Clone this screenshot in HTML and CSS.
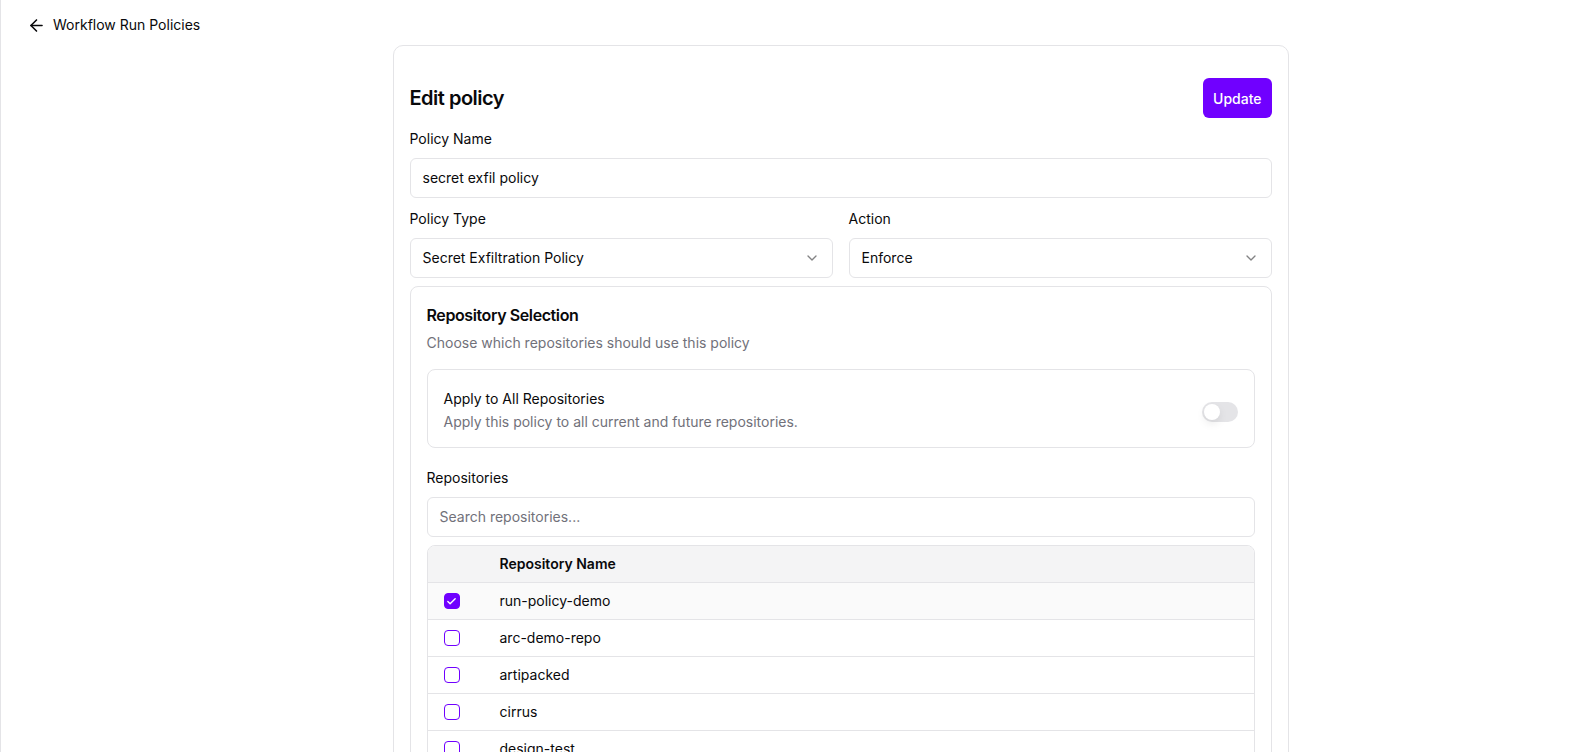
FILE: index.html
```html
<!DOCTYPE html>
<html lang="en">
<head>
    <meta charset="UTF-8">
    <meta name="viewport" content="width=device-width, initial-scale=1.0">
    <title>Edit policy</title>
    <link rel="stylesheet" href="styles.css">
</head>
<body>
    <div class="page">
        <a class="back" href="#">
            <svg class="back-icon" viewBox="0 0 24 24" fill="none" stroke="currentColor" stroke-width="2" stroke-linecap="round" stroke-linejoin="round"><path d="m12 19-7-7 7-7"/><path d="M19 12H5"/></svg>
            <span>Workflow Run Policies</span>
        </a>

        <div class="main">
            <div class="card">
                <div class="card-head">
                    <h1>Edit policy</h1>
                    <button class="button">Update</button>
                </div>

                <div class="field">
                    <label class="label">Policy Name</label>
                    <div class="input">secret exfil policy</div>
                </div>

                <div class="field-row">
                    <div class="field">
                        <label class="label">Policy Type</label>
                        <div class="input select">
                            <span>Secret Exfiltration Policy</span>
                            <svg class="chevron" viewBox="0 0 24 24" fill="none" stroke="currentColor" stroke-width="2" stroke-linecap="round" stroke-linejoin="round"><path d="m6 9 6 6 6-6"/></svg>
                        </div>
                    </div>
                    <div class="field">
                        <label class="label">Action</label>
                        <div class="input select">
                            <span>Enforce</span>
                            <svg class="chevron" viewBox="0 0 24 24" fill="none" stroke="currentColor" stroke-width="2" stroke-linecap="round" stroke-linejoin="round"><path d="m6 9 6 6 6-6"/></svg>
                        </div>
                    </div>
                </div>

                <div class="repo-box">
                    <h2>Repository Selection</h2>
                    <p class="muted desc">Choose which repositories should use this policy</p>

                    <div class="apply-all">
                        <div>
                            <div class="apply-title">Apply to All Repositories</div>
                            <div class="muted apply-desc">Apply this policy to all current and future repositories.</div>
                        </div>
                        <span class="switch"><span class="knob"></span></span>
                    </div>

                    <label class="label repos-label">Repositories</label>
                    <div class="input placeholder">Search repositories...</div>

                    <div class="table">
                        <div class="row head">
                            <div></div>
                            <div>Repository Name</div>
                        </div>
                        <div class="row selected">
                            <div><span class="check checked"><svg viewBox="0 0 24 24" fill="none" stroke="currentColor" stroke-width="3" stroke-linecap="round" stroke-linejoin="round"><path d="M20 6 9 17l-5-5"/></svg></span></div>
                            <div>run-policy-demo</div>
                        </div>
                        <div class="row">
                            <div><span class="check"></span></div>
                            <div>arc-demo-repo</div>
                        </div>
                        <div class="row">
                            <div><span class="check"></span></div>
                            <div>artipacked</div>
                        </div>
                        <div class="row">
                            <div><span class="check"></span></div>
                            <div>cirrus</div>
                        </div>
                        <div class="row">
                            <div><span class="check"></span></div>
                            <div>design-test</div>
                        </div>
                    </div>
                </div>
            </div>
        </div>
    </div>
</body>
</html>
```

FILE: styles.css
```css
* {
    box-sizing: border-box;
}
body {
    margin: 0;
    background-color: #fff;
    color: #09090b;
    font-family: 'Inter', 'Liberation Sans', sans-serif;
    font-size: 14px;
    line-height: 20px;
}
.page {
    border-left: 1px solid #e4e4e7;
    min-height: 100vh;
}
.back {
    display: flex;
    align-items: center;
    gap: 7px;
    padding: 15px 0 10px 26px;
    color: #09090b;
    text-decoration: none;
}
.back-icon {
    width: 19px;
    height: 19px;
}
.main {
    padding-left: 96px;
}
.card {
    max-width: 896px;
    margin: 0 auto;
    border: 1px solid #e4e4e7;
    border-radius: 10px;
    padding: 32px 16px 16px;
}
.card-head {
    display: flex;
    justify-content: space-between;
    align-items: center;
}
h1 {
    margin: 0;
    font-size: 20px;
    font-weight: 600;
    letter-spacing: -0.5px;
}
.button {
    height: 40px;
    padding: 0 10px;
    background-color: #7000ff;
    color: white;
    border: none;
    border-radius: 6px;
    font-family: inherit;
    font-size: 14px;
    font-weight: 500;
    cursor: pointer;
}
.field {
    margin-top: 11px;
}
.label {
    display: block;
    margin-bottom: 9px;
}
.input {
    height: 40px;
    border: 1px solid #e4e4e7;
    border-radius: 6px;
    padding: 0 12px;
    display: flex;
    align-items: center;
}
.select {
    justify-content: space-between;
}
.chevron {
    width: 16px;
    height: 16px;
    color: #09090b;
    opacity: 0.5;
}
.placeholder {
    color: #71717a;
}
.field-row {
    display: grid;
    grid-template-columns: 1fr 1fr;
    gap: 16px;
}
.repo-box {
    margin-top: 8px;
    border: 1px solid #e4e4e7;
    border-radius: 8px;
    padding: 16px;
}
h2 {
    margin: 0;
    font-size: 16px;
    line-height: 24px;
    font-weight: 600;
    letter-spacing: -0.4px;
}
.muted {
    color: #71717a;
}
.desc {
    margin: 6px 0 0;
}
.apply-all {
    margin-top: 16px;
    border: 1px solid #e4e4e7;
    border-radius: 8px;
    padding: 19px 16px 15px;
    display: flex;
    justify-content: space-between;
    align-items: center;
}
.apply-desc {
    margin-top: 3px;
}
.switch {
    width: 36px;
    height: 20px;
    border-radius: 10px;
    background-color: #e4e4e7;
    padding: 2px;
    margin-top: 3px;
    display: flex;
}
.knob {
    width: 16px;
    height: 16px;
    border-radius: 50%;
    background-color: white;
    box-shadow: 0 4px 8px rgba(0, 0, 0, 0.08);
}
.repos-label {
    margin-top: 20px;
}
.table {
    margin-top: 8px;
    border: 1px solid #e4e4e7;
    border-radius: 8px 8px 0 0;
    overflow: hidden;
}
.row {
    display: grid;
    grid-template-columns: 72px 1fr;
    align-items: center;
    height: 37px;
    border-bottom: 1px solid #e4e4e7;
}
.row > div:first-child {
    padding-left: 16px;
    display: flex;
}
.head {
    background-color: #f4f4f5;
    font-weight: 600;
}
.selected {
    background-color: #fafafa;
}
.check {
    width: 16px;
    height: 16px;
    border: 1.5px solid #7000ff;
    border-radius: 4px;
    display: flex;
    align-items: center;
    justify-content: center;
    color: white;
}
.checked {
    background-color: #7000ff;
}
.check svg {
    width: 11px;
    height: 11px;
}
```
